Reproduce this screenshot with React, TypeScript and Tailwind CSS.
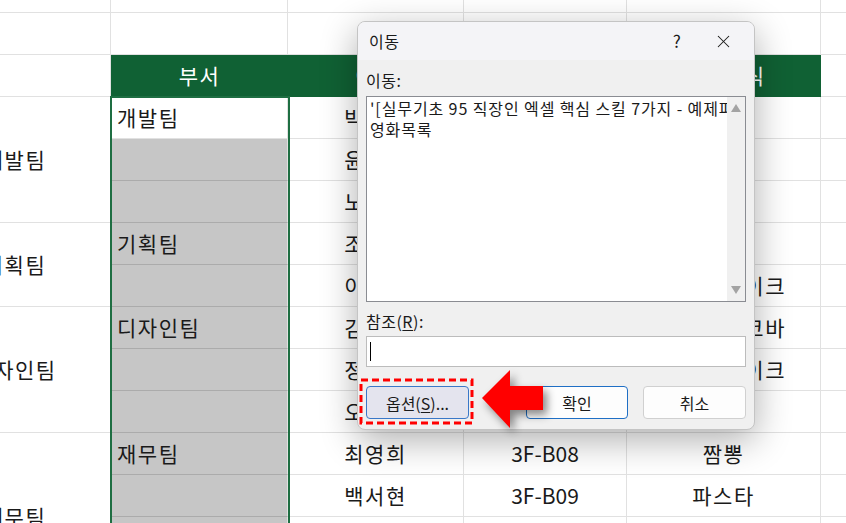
import React from 'react';
import { X } from 'lucide-react';

// sheet rows below the header (y 97 onward)
const rows = [
  { b: '개발팀', c: '박지훈', d: '3F-A01', e: '비빔밥' },
  { b: '', c: '윤서연', d: '3F-A02', e: '돈가스' },
  { b: '', c: '노민수', d: '3F-A03', e: '칼국수' },
  { b: '기획팀', c: '조현우', d: '3F-A04', e: '떡볶이' },
  { b: '', c: '이수진', d: '3F-A05', e: '생크림케이크' },
  { b: '디자인팀', c: '김도윤', d: '3F-B01', e: '에너지초코바' },
  { b: '', c: '정하은', d: '3F-B02', e: '안심스테이크' },
  { b: '', c: '오세훈', d: '3F-B03', e: '초밥' },
  { b: '재무팀', c: '최영희', d: '3F-B08', e: '짬뽕' },
  { b: '', c: '백서현', d: '3F-B09', e: '파스타' },
  { b: '', c: '', d: '', e: '' },
  { b: '', c: '', d: '', e: '' },
];

const groups: Record<number, { name: string; span: string }> = {
  0: { name: '개발팀', span: 'row-span-3' },
  3: { name: '기획팀', span: 'row-span-2' },
  5: { name: '디자인팀', span: 'row-span-3' },
  8: { name: '재무팀', span: 'row-span-4' },
};

const cell = 'border-r border-b border-[#e1e1e1] flex items-center justify-center';
const head = 'bg-[#106134] text-white flex items-center justify-center';

function Sheet() {
  return (
    <div className="ml-[-80px] grid grid-cols-[191px_177px_176px_163px_194px_120px] grid-rows-[13px_42px_42px_repeat(12,42px)] text-[21px] tracking-[1.5px] text-[#1a1a1a]">
      {/* two empty rows on top */}
      {Array.from({ length: 12 }).map((_, i) => (
        <div key={'t' + i} className={cell} />
      ))}
      {/* header */}
      <div className={cell} />
      <div className={head}>부서</div>
      <div className={head}>이름</div>
      <div className={head}>좌석</div>
      <div className={head}>선호음식</div>
      <div className={cell} />
      {rows.map((r, i) => (
        <React.Fragment key={i}>
          {groups[i] && (
            <div className={`${groups[i].span} ${cell}`}>{groups[i].name}</div>
          )}
          <div
            className={
              i === 0
                ? 'bg-white border-r border-b border-[#e1e1e1] flex items-center pl-[6px]'
                : 'bg-[#c6c6c6] border-r border-r-[#e1e1e1] border-b border-b-[#ababab] flex items-center pl-[6px]'
            }
          >
            {r.b}
          </div>
          <div className={cell}>{r.c}</div>
          <div className={`${cell} tracking-normal`}>{r.d}</div>
          <div className={`${cell} whitespace-nowrap`}>{r.e}</div>
          <div className={cell} />
        </React.Fragment>
      ))}
    </div>
  );
}

function Dialog() {
  return (
    <div className="absolute left-[357px] top-[21px] w-[398px] h-[409px] rounded-lg border border-[#c4c4c4] bg-[#f0f0f0] shadow-[0_10px_36px_rgba(0,0,0,0.32)] overflow-hidden flex flex-col text-[#1a1a1a]">
      <div className="h-[38px] shrink-0 bg-[#f4f4f7] flex items-center pl-[11px] pr-[8px] text-[16px] tracking-[0.5px]">
        <span>이동</span>
        <span className="ml-auto w-[46px] text-center text-[17px]">?</span>
        <span className="w-[46px] flex justify-center">
          <X size={21} strokeWidth={1.2} />
        </span>
      </div>
      <div className="flex-1 px-[8px] pt-[10px] flex flex-col text-[16px] tracking-[0.5px]">
        <div className="leading-[20px]">이동:</div>
        <div className="mt-[6px] h-[206px] border border-[#8a8c92] bg-white flex">
          <div className="flex-1 overflow-hidden pl-[3px] pt-[1px] leading-[21px] tracking-[0.9px]">
            <div className="whitespace-nowrap">'[실무기초 95 직장인 엑셀 핵심 스킬 7가지 - 예제파일.xlsx]영화목록'!$A$1</div>
            <div className="whitespace-nowrap">영화목록</div>
          </div>
          <div className="w-[18px] bg-[#f0f0f0] flex flex-col items-center justify-between py-[7px]">
            <svg width="10" height="8" viewBox="0 0 10 8">
              <polygon points="5,0 10,8 0,8" fill="#a3a3a3" />
            </svg>
            <svg width="10" height="8" viewBox="0 0 10 8">
              <polygon points="0,0 10,0 5,8" fill="#a3a3a3" />
            </svg>
          </div>
        </div>
        <div className="mt-[9px] leading-[20px]">
          참조(<span className="underline underline-offset-2">R</span>):
        </div>
        <div className="mt-[5px] h-[31px] border border-[#bcbcbc] bg-white flex items-center pl-[3px]">
          <div className="w-px h-[19px] bg-black" />
        </div>
        <div className="mt-[19px] flex h-[33px] tracking-normal">
          <div className="w-[103px] rounded-[4px] border border-[#3a78c8] bg-[#e4e4ee] flex items-center justify-center">
            옵션(<span className="underline underline-offset-2">S</span>)...
          </div>
          <div className="ml-auto w-[102px] rounded-[4px] border border-[#1f6fc5] bg-[#fdfdfd] flex items-center justify-center">
            확인
          </div>
          <div className="ml-[15px] w-[103px] rounded-[4px] border border-[#d0d0d0] bg-[#fdfdfd] flex items-center justify-center">
            취소
          </div>
        </div>
      </div>
    </div>
  );
}

export default function App() {
  return (
    <div className="relative w-[846px] h-[523px] overflow-hidden bg-white font-['Noto_Sans_CJK_KR','Noto_Sans',sans-serif]">
      <Sheet />
      {/* selection outline on column B */}
      <div className="absolute left-[110px] top-[96px] w-[180px] h-[460px] border-2 border-[#1e6e42]" />
      <Dialog />
      {/* red dashed highlight */}
      <svg className="absolute left-[359px] top-[378px]" width="115" height="47">
        <rect x="2" y="2" width="111" height="43" fill="none" stroke="#ff0000" strokeWidth="3" strokeDasharray="7 4" />
      </svg>
      {/* red arrow */}
      <svg
        className="absolute left-[470px] top-[360px] drop-shadow-[4px_5px_4px_rgba(0,0,0,0.45)]"
        width="90"
        height="80"
      >
        <polygon points="12,38 40,10 40,26 73,26 73,50 40,50 40,68" fill="#ff0000" />
      </svg>
    </div>
  );
}
